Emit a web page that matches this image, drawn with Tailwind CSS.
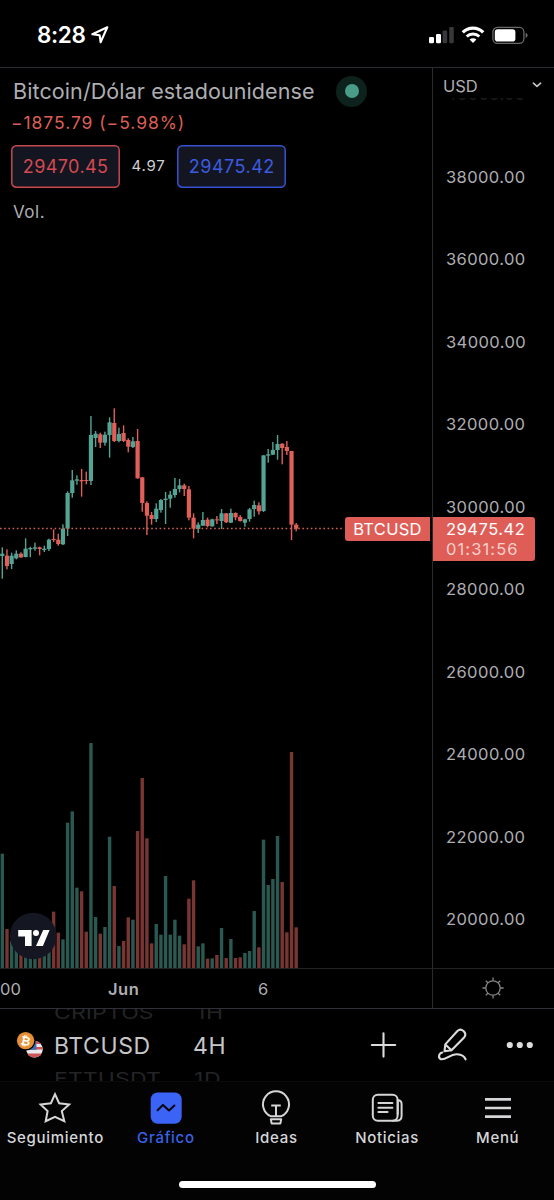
<!DOCTYPE html>
<html lang="es">
<head>
  <meta charset="UTF-8">
  <meta name="viewport" content="width=device-width, initial-scale=1.0">
  <title>BTCUSD</title>
  <script src="https://cdn.jsdelivr.net/npm/@tailwindcss/browser@4"></script>
</head>
<body class="bg-black font-['Inter','Liberation_Sans',sans-serif] text-[#aeaeb2]">
<div class="w-[554px] h-[1200px] flex flex-col overflow-hidden whitespace-nowrap">

  <!-- Status bar -->
  <header class="h-[68px] shrink-0 border-b border-[#2b2c31] flex items-start justify-between pl-[37px] pr-[26px] text-white">
    <div class="flex items-center pt-[20px]">
      <span class="text-[22.5px] leading-[30px] font-semibold tracking-[-0.4px]">8:28</span>
      <svg class="ml-[5px] w-[20px] h-[20px]" viewBox="0 0 20 20" fill="none" stroke="currentColor" stroke-width="2.1" stroke-linejoin="round">
        <path d="M17.3 2.3 L2.3 9.3 L9.6 10.2 L10.6 17.2 Z" />
      </svg>
    </div>
    <div class="flex items-center pt-[25px]">
      <svg class="w-[99px] h-[20px]" viewBox="0 0 99 20" fill="none">
        <rect x="0" y="12" width="5" height="6.3" rx="1.2" fill="#fff" />
        <rect x="7" y="9" width="5" height="9.3" rx="1.2" fill="#fff" />
        <rect x="13.6" y="5.6" width="4.6" height="12.7" rx="1.2" fill="#38383a" />
        <rect x="20.2" y="2" width="4.6" height="16.3" rx="1.2" fill="#38383a" />
        <path d="M33.8 7.3 A14.5 14.5 0 0 1 54.2 7.3" stroke="#fff" stroke-width="3.3" />
        <path d="M37.7 11.5 A9 9 0 0 1 50.3 11.5" stroke="#fff" stroke-width="3" />
        <path d="M44 18 L40.6 14.6 A4.8 4.8 0 0 1 47.4 14.6 Z" fill="#fff" />
        <rect x="63.9" y="2.4" width="31" height="16" rx="4.6" stroke="#68686b" stroke-width="1.3" />
        <rect x="65.8" y="4.3" width="20.6" height="12.2" rx="2.8" fill="#fff" />
        <path d="M96.6 7.8 Q98.6 8.7 98.6 10.3 Q98.6 12 96.6 12.9 Z" fill="#68686b" />
      </svg>
    </div>
  </header>

  <!-- Chart and price scale -->
  <main class="h-[901px] shrink-0 flex border-b border-[#232327]">
    <section class="relative w-[433px] border-r border-[#2b2b2f]">
      <svg id="chart" class="absolute left-0 top-0 w-[432px] h-[900px]" viewBox="0 68 432 900"></svg>

      <div class="relative pl-[13px] pt-[7px]">
        <div class="flex items-center h-[32px]">
          <h1 class="text-[21.5px] leading-[32px] tracking-[0.1px]">Bitcoin/Dólar estadounidense</h1>
          <span class="absolute left-[336px] flex size-[31px] items-center justify-center rounded-full bg-[#0d221d]">
            <span class="size-[14px] rounded-full bg-[#4a9c89]"></span>
          </span>
        </div>
        <p class="-ml-[2px] h-[32px] text-[17.5px] leading-[32px] tracking-[0.95px] text-[#dd5e56]">−1875.79 (−5.98%)</p>
        <div class="-ml-[2px] mt-[6px] flex items-center">
          <svg class="w-[109px] h-[43px]" viewBox="0 0 109 43">
            <rect x="0.8" y="0.8" width="107.4" height="41.4" rx="4.5" fill="#131520" stroke="#c4484e" stroke-width="1.5" />
            <text x="54.6" y="28" text-anchor="middle" class="text-[18px] tracking-[0.4px]" fill="#d44a52">29470.45</text>
          </svg>
          <span class="w-[57px] text-center text-[15px] tracking-[0.8px] text-[#d0d0d2]">4.97</span>
          <svg class="w-[109px] h-[43px]" viewBox="0 0 109 43">
            <rect x="0.8" y="0.8" width="107.4" height="41.4" rx="4.5" fill="#131520" stroke="#3652d0" stroke-width="1.5" />
            <text x="54.8" y="28" text-anchor="middle" class="text-[18px] tracking-[0.5px]" fill="#3c5ce0">29475.42</text>
          </svg>
        </div>
        <p class="mt-[10px] text-[17px] leading-[28px] tracking-[0.5px]">Vol.</p>
      </div>

      <span class="absolute left-[345px] top-[449px] h-[24px] w-[85px] rounded-l-[3px] bg-[#de5e57] text-center text-[16.5px] leading-[24px] tracking-[0.3px] text-white">BTCUSD</span>

      <!-- TradingView badge -->
      <svg class="absolute left-[9px] top-[844px] size-[48px]" viewBox="0 0 48 48">
        <circle cx="24.2" cy="24" r="23.3" fill="#141722" />
        <path d="M9.2 18 H22.6 V34 H16 V24.6 H9.2 Z M34.2 18 H40.6 L33.9 34 H27 Z" fill="#fff" />
        <circle cx="27" cy="21.1" r="3" fill="#fff" />
      </svg>
    </section>

    <aside class="relative flex-1">
      <div class="flex h-[30px] items-end justify-between pl-[10px] pr-[12px]">
        <span class="text-[16.5px] leading-[23px]">USD</span>
        <svg class="mb-[9px] w-[10px] h-[8px]" viewBox="0 0 10 8" fill="none" stroke="#c4c4c8" stroke-width="1.7" stroke-linecap="round" stroke-linejoin="round">
          <path d="M1.4 2.2 L5 5.4 L8.6 2.2" />
        </svg>
      </div>
      <!-- 40000 tick scrolled under the currency selector -->
      <div class="h-[3px] overflow-hidden pl-[13px] text-[16.5px] text-[#1c1c1e]"><div class="-mt-[14px] leading-[20px] tracking-[0.3px]">40000.00</div></div>
      <div id="ticks" class="mt-[34.5px] pl-[13px] text-[16.5px] tracking-[0.4px]"></div>

      <div class="absolute left-0 top-[449px] h-[44px] w-[102px] rounded-r-[3px] bg-[#de5e57] pl-[13px] pt-[2px] text-[16.5px] leading-[20px]">
        <p class="tracking-[0.5px] text-white">29475.42</p>
        <p class="tracking-[1.1px] text-[#f8cfcb]">01:31:56</p>
      </div>
    </aside>
  </main>

  <!-- Time scale -->
  <div class="flex h-[40px] shrink-0 border-b border-[#2f303a] text-[16.5px] leading-[40px]">
    <div class="relative w-[433px] border-r border-[#2b2b2f]">
      <span class="absolute left-0">00</span>
      <span class="absolute left-[108px] font-semibold tracking-[0.5px]">Jun</span>
      <span class="absolute left-[258px]">6</span>
    </div>
    <div class="flex flex-1 items-center justify-center pb-[2px] pr-[2px]">
      <svg class="size-[24px]" viewBox="0 0 24 24" fill="none" stroke="#85858a" stroke-width="1.3">
        <circle cx="12" cy="12" r="7.2" />
        <path d="M12 1.4V4.6M12 19.4v3.2M1.4 12H4.6M19.4 12h3.2M4.8 4.8l2 2M17.2 17.2l2 2M4.8 19.2l2-2M17.2 6.8l2-2" />
      </svg>
    </div>
  </div>

  <!-- Symbol and interval picker -->
  <div class="flex h-[72px] shrink-0 overflow-hidden">
    <svg class="ml-[16px] mt-[21px] size-[28px]" viewBox="0 0 28 28">
      <defs><clipPath id="flag"><circle cx="18.5" cy="19.3" r="8.3" /></clipPath></defs>
      <g clip-path="url(#flag)">
        <rect x="9" y="10" width="20" height="19" fill="#e9e9ec" />
        <path d="M9 11h20v3H9zM9 17h20v2.6H9zM9 23.5h20v5H9z" fill="#cf5458" />
        <rect x="9" y="10" width="11.4" height="9.8" fill="#3d6db5" />
      </g>
      <circle cx="9.6" cy="10.6" r="10" fill="#000" />
      <circle cx="9.6" cy="10.6" r="8.7" fill="#e78f35" />
      <text x="9.8" y="15" text-anchor="middle" font-family="Liberation Sans" font-size="12" font-weight="700" fill="#fff" transform="rotate(12 9.6 10.6)">₿</text>
    </svg>
    <div class="ml-[10px] w-[139px] text-[23px] tracking-[0.6px]">
      <div class="-mt-[12px] h-[32px] origin-left scale-y-75 leading-[32px] tracking-[0.1px] text-[#242426]">CRIPTOS</div>
      <div class="h-[34px] leading-[34px] text-[#c6c6c8]">BTCUSD</div>
      <div class="h-[32px] origin-left scale-y-75 leading-[32px] tracking-[0.1px] text-[#242426]">ETTUSDT</div>
    </div>
    <div class="w-[170px] text-[23px] tracking-[0.6px]">
      <div class="-mt-[12px] h-[32px] origin-left scale-y-75 pl-[3px] leading-[32px] text-[#242426]">1H</div>
      <div class="h-[34px] leading-[34px] text-[#c6c6c8]">4H</div>
      <div class="h-[32px] origin-left scale-y-75 pl-[1px] leading-[32px] text-[#242426]">1D</div>
    </div>
    <svg class="mt-[16px] w-[180px] h-[40px]" viewBox="363 1025 180 40" fill="none" stroke="#dcdcde" stroke-width="2.1" stroke-linecap="round" stroke-linejoin="round">
      <path d="M371.8 1045H395.2M383.5 1033.2V1056.6" />
      <path d="M444.5 1051.3 L445.3 1044.4 L457.4 1031 Q460.3 1028.4 463.5 1031 Q466.7 1034 464.3 1037.2 L451.5 1050.3 Z M445.3 1044.4 L451.5 1050.3" />
      <path d="M442.3 1052.6 C438.4 1053.6 438 1058 441 1059.2 C446 1060.4 450 1053.8 457 1054.3 C461.8 1054.7 464.6 1056.4 465.6 1059.4" />
      <g fill="#dcdcde" stroke="none"><circle cx="509.8" cy="1045" r="3.1" /><circle cx="519.8" cy="1045" r="3.1" /><circle cx="529.8" cy="1045" r="3.1" /></g>
    </svg>
  </div>

  <!-- Tab bar -->
  <nav class="relative grid h-[119px] shrink-0 grid-cols-5 border-t border-[#0a0a0c] bg-[#030304] pr-px text-center text-[15px] font-medium leading-[20px] tracking-[0.7px] text-[#d6d6d8]">
    <a class="flex flex-col items-center pt-[8px]">
      <svg class="size-[36px]" viewBox="0 0 36 36" fill="none" stroke="currentColor" stroke-width="2" stroke-linejoin="miter">
        <path d="M18 4.2 L22.1 13.2 L32.2 14.4 L24.8 21 L27.3 31.2 L18 26.8 L8.7 31.2 L10.6 21 L3.6 14.4 L13.9 13.2 Z" />
      </svg>
      <span class="mt-[2px]">Seguimiento</span>
    </a>
    <a class="flex flex-col items-center pt-[8px] text-[#3a62e8]">
      <svg class="size-[36px]" viewBox="0 0 36 36" fill="none">
        <rect x="2.7" y="2.5" width="31" height="31.2" rx="7" fill="#3b63f5" />
        <path d="M9.6 20.2 L15 14.9 L21 20.5 L26.4 15.5" stroke="#05060c" stroke-width="2" stroke-linecap="round" stroke-linejoin="round" />
      </svg>
      <span class="mt-[2px]">Gráfico</span>
    </a>
    <a class="flex flex-col items-center pt-[8px]">
      <svg class="size-[36px]" viewBox="0 0 36 36" fill="none" stroke="currentColor" stroke-width="2" stroke-linejoin="round">
        <path d="M12.7 26.2 A13 13 0 1 1 23.3 26.2 Z" />
        <path d="M13.2 15.4H22.8M18 15.4V26.2M12.8 29.2H23.2L22.4 33.4H13.6Z" />
      </svg>
      <span class="mt-[2px]">Ideas</span>
    </a>
    <a class="flex flex-col items-center pt-[8px]">
      <svg class="size-[36px]" viewBox="0 0 36 36" fill="none" stroke="currentColor" stroke-width="2" stroke-linecap="round" stroke-linejoin="round">
        <rect x="3.8" y="4.8" width="24.8" height="26" rx="5" />
        <path d="M28.6 10 Q32.6 10.6 32.6 14 V26 Q32.4 30.8 27.4 30.8 H24M28.8 10V24" />
        <path d="M9.4 13H23.4M9.4 17.8H23.4M9.4 22H18.6" />
      </svg>
      <span class="mt-[2px]">Noticias</span>
    </a>
    <a class="flex flex-col items-center pt-[8px]">
      <svg class="size-[36px]" viewBox="0 0 36 36" fill="none" stroke="currentColor" stroke-width="2.6">
        <path d="M5 9.4H31M5 18H31M5 26.6H31" />
      </svg>
      <span class="mt-[2px]">Menú</span>
    </a>
    <div class="absolute left-[179px] top-[99px] h-[7px] w-[197px] rounded-full bg-white"></div>
  </nav>
</div>

<script>
  // [high, open/close top, open/close bottom, low, volume top, up?] in thirds of a pixel
  const bars = [
    [472,491,498,566,371,1],[478,497,528,538,597,0],[488,497,522,537,632,1],[481,491,505,508,655,1],
    [487,491,502,504,672,0],[445,476,501,502,660,1],[470,474,478,502,670,1],[458,472,476,482,668,1],
    [470,472,477,496,672,0],[467,476,480,486,675,1],[446,449,477,483,660,1],[418,447,450,456,545,0],
    [431,449,462,467,608,0],[403,416,463,465,628,1],[304,309,416,438,278,1],[240,271,309,323,244,1],
    [256,268,272,284,473,1],[237,270,274,320,484,0],[245,270,273,283,605,0],[78,135,273,285,39,1],
    [123,131,144,171,561,1],[128,133,158,174,611,0],[125,134,158,167,591,1],[82,97,135,203,320,1],
    [55,99,153,156,468,0],[113,132,153,157,648,1],[106,129,153,156,633,0],[145,150,170,187,562,0],
    [141,154,171,174,569,1],[117,153,265,266,303,0],[261,262,339,365,144,0],[334,339,377,435,325,0],
    [366,375,387,404,640,0],[340,356,387,396,582,1],[327,330,360,368,614,1],[306,326,330,402,438,1],
    [303,314,326,353,614,1],[264,297,315,323,569,1],[267,286,297,307,617,1],[281,286,297,318,643,0],
    [288,298,383,391,506,0],[370,383,416,445,451,0],[397,404,417,429,649,1],[366,390,407,408,640,1],
    [383,389,408,412,686,0],[386,388,409,410,685,1],[378,388,391,402,675,0],[357,370,393,417,594,1],
    [369,370,397,399,684,0],[356,369,398,399,627,1],[367,369,382,391,684,0],[375,381,393,395,682,0],
    [386,388,398,410,669,1],[354,358,387,395,663,1],[332,345,357,380,543,1],[337,346,364,374,652,0],
    [196,196,363,366,329,1],[177,193,197,218,465,1],[156,180,194,195,447,1],[135,162,180,209,318,1],
    [160,161,174,223,456,0],[153,171,183,195,607,0],[183,183,404,450,66,0],[399,404,416,424,592,0]
  ];
  let svg = '';
  bars.forEach(([high, top, bottom, low, vol, up], i) => {
    const x = 2.3 + i * 4.665;
    const y = v => 390 + v / 3;
    const color = up ? '#53a495' : '#e05f59';
    const vy = 730 + vol / 3;
    svg += `<rect x="${x - 1.7}" y="${vy}" width="3.4" height="${968 - vy}" fill="${up ? '#2b5851' : '#783633'}" />`;
    svg += `<rect x="${x - 0.7}" y="${y(high)}" width="1.4" height="${(low - high) / 3}" fill="${color}" />`;
    svg += `<rect x="${x - 2.1}" y="${y(top)}" width="4.2" height="${(bottom - top) / 3}" fill="${color}" />`;
  });
  // Last price line
  svg += '<path d="M0 528.5H344" stroke="#d0604f" stroke-width="1.4" stroke-dasharray="1.6 2.6" />';
  document.getElementById('chart').innerHTML = svg;

  // Price scale
  let ticks = '';
  for (let price = 38000; price >= 20000; price -= 2000) {
    ticks += `<div class="h-[82.5px] leading-[82.5px]">${price}.00</div>`;
  }
  document.getElementById('ticks').innerHTML = ticks;
</script>
</body>
</html>
